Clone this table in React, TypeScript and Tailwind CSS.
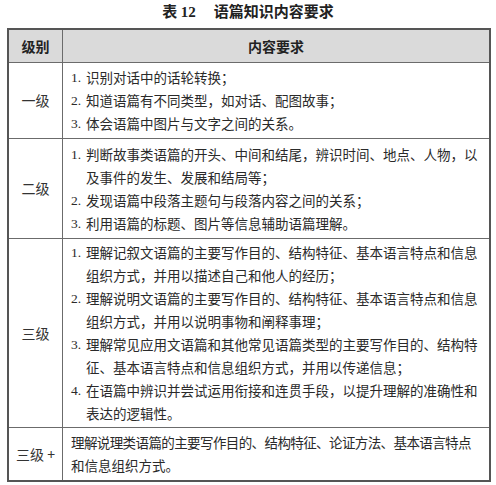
import React from "react";

const font = { fontFamily: '"Noto Sans CJK SC", "Noto Sans", sans-serif' };

type Item = { n?: string; lines: string[]; tight?: boolean };

function Items({ items }: { items: Item[] }) {
  return (
    <div className="flex flex-col">
      {items.map((it, i) => (
        <div key={i} className="flex">
          {it.n ? (
            <span
              className="w-[15px] shrink-0 text-[13.5px]"
              style={{ fontFamily: '"Liberation Serif", serif' }}
            >
              {it.n}
            </span>
          ) : null}
          <div className="flex flex-col">
            {it.lines.map((l, j) => (
              <span
                key={j}
                className={
                  it.tight && j === 0
                    ? "whitespace-nowrap tracking-[-0.6px]"
                    : "whitespace-nowrap"
                }
              >
                {l}
              </span>
            ))}
          </div>
        </div>
      ))}
    </div>
  );
}

function Row({
  label,
  items,
  pad = "py-[3px]",
}: {
  label: string;
  items: Item[];
  pad?: string;
}) {
  return (
    <div className="flex border-t border-[#6b6b6b]">
      <div className="w-[54px] shrink-0 border-r border-[#6b6b6b] flex items-center justify-center text-[14px] text-[#333]">
        {label}
      </div>
      <div
        className={
          "flex-1 pl-[8px] pr-[6px] text-[13.5px] leading-[23px] text-[#2a2a2a] " +
          pad
        }
      >
        <Items items={items} />
      </div>
    </div>
  );
}

export default function App() {
  return (
    <div className="w-[496px] h-[485px] bg-white relative" style={font}>
      <div className="h-[28px] flex items-start justify-center pt-[1px]">
        <span className="text-[15px] font-bold text-[#222] leading-[20px]">
          <span>表 </span>
          <span style={{ fontFamily: '"Liberation Serif", serif' }}>12</span>
          <span className="ml-[18px]">语篇知识内容要求</span>
        </span>
      </div>
      <div className="ml-[7px] w-[484px] border-2 border-[#555] flex flex-col">
        <div className="flex h-[32px] bg-[#dadada]">
          <div className="w-[54px] shrink-0 border-r border-[#6b6b6b] flex items-center justify-center text-[14px] font-bold text-[#222]">
            级别
          </div>
          <div className="flex-1 flex items-center justify-center text-[14px] font-bold text-[#222]">
            内容要求
          </div>
        </div>
        <Row
          label="一级"
          items={[
            { n: "1.", lines: ["识别对话中的话轮转换；"] },
            { n: "2.", lines: ["知道语篇有不同类型，如对话、配图故事；"] },
            { n: "3.", lines: ["体会语篇中图片与文字之间的关系。"] },
          ]}
        />
        <Row
          label="二级"
          pad="pt-[4px] pb-[3px]"
          items={[
            {
              n: "1.",
              lines: [
                "判断故事类语篇的开头、中间和结尾，辨识时间、地点、人物，以",
                "及事件的发生、发展和结局等；",
              ],
            },
            { n: "2.", lines: ["发现语篇中段落主题句与段落内容之间的关系；"] },
            { n: "3.", lines: ["利用语篇的标题、图片等信息辅助语篇理解。"] },
          ]}
        />
        <Row
          label="三级"
          pad="py-[2px]"
          items={[
            {
              n: "1.",
              lines: [
                "理解记叙文语篇的主要写作目的、结构特征、基本语言特点和信息",
                "组织方式，并用以描述自己和他人的经历；",
              ],
            },
            {
              n: "2.",
              lines: [
                "理解说明文语篇的主要写作目的、结构特征、基本语言特点和信息",
                "组织方式，并用以说明事物和阐释事理；",
              ],
            },
            {
              n: "3.",
              lines: [
                "理解常见应用文语篇和其他常见语篇类型的主要写作目的、结构特",
                "征、基本语言特点和信息组织方式，并用以传递信息；",
              ],
            },
            {
              n: "4.",
              lines: [
                "在语篇中辨识并尝试运用衔接和连贯手段，以提升理解的准确性和",
                "表达的逻辑性。",
              ],
            },
          ]}
        />
        <Row
          label="三级 +"
          items={[
            {
              tight: true,
              lines: [
                "理解说理类语篇的主要写作目的、结构特征、论证方法、基本语言特点",
                "和信息组织方式。",
              ],
            },
          ]}
        />
      </div>
    </div>
  );
}
